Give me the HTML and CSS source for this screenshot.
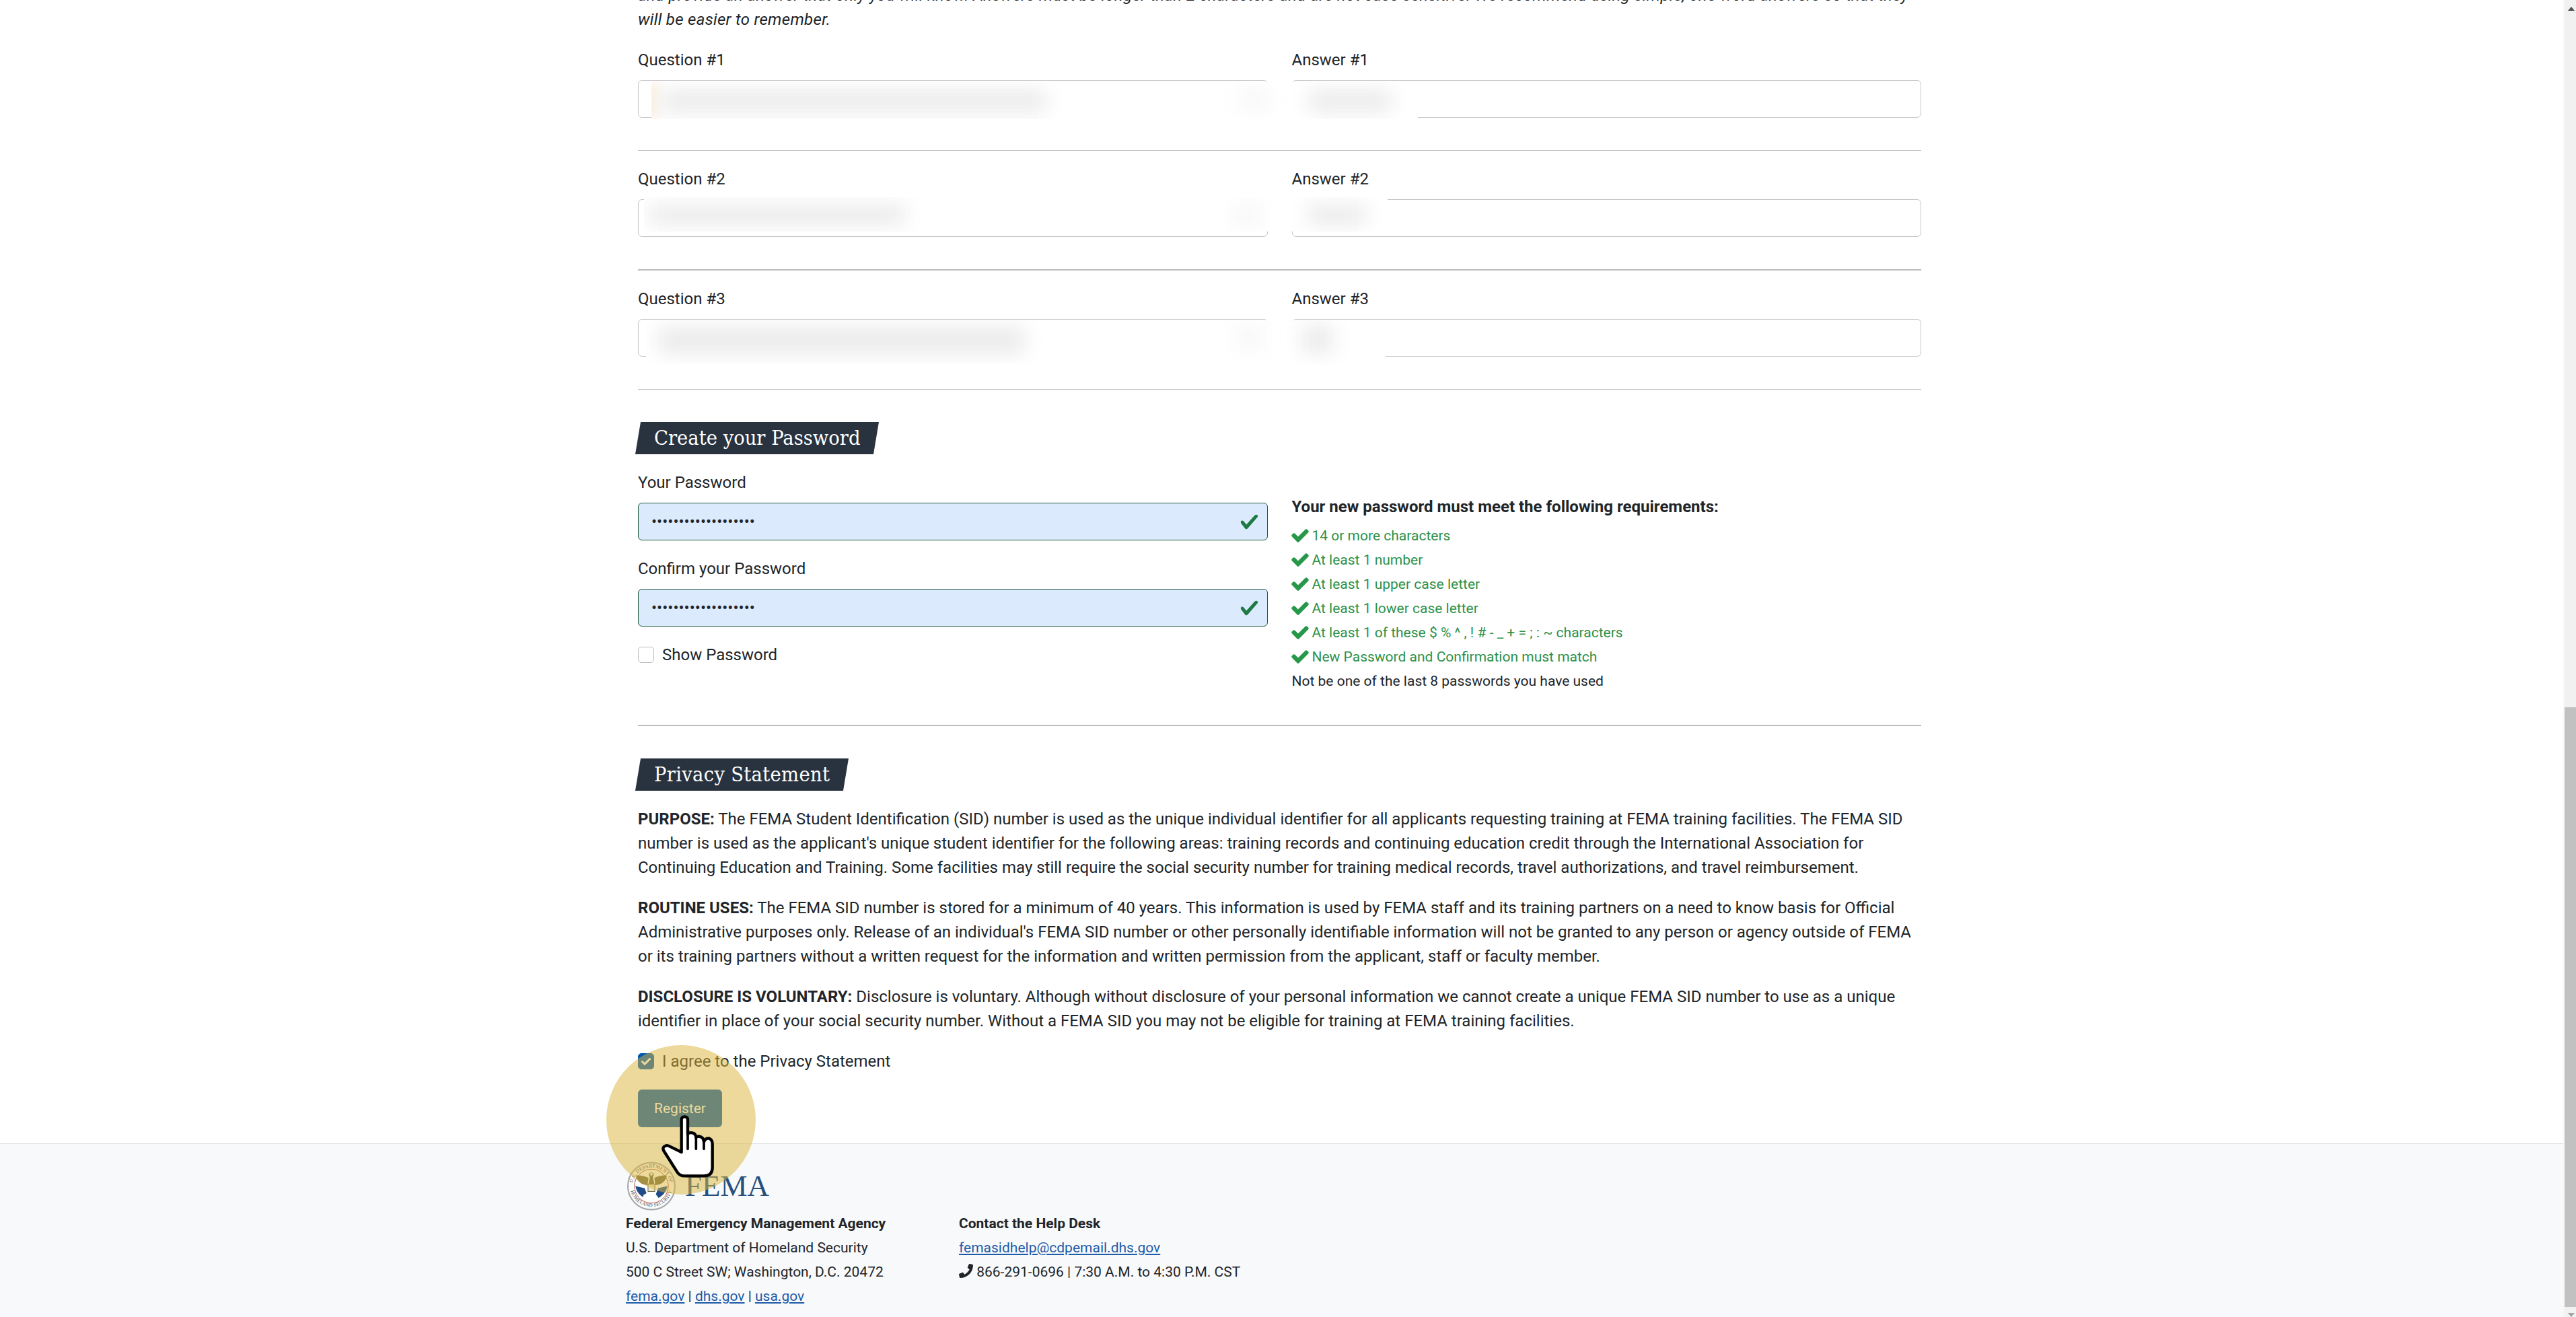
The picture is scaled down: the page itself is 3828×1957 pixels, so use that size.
FILE: index.html
```html
<!DOCTYPE html>
<html lang="en">
<head>
<meta charset="utf-8">
<title>FEMA SID Registration</title>
<link rel="stylesheet" href="styles.css">
</head>
<body>
<div class="viewport">
  <div class="page">
    <main class="main">
      <p class="intro">and provide an answer that only you will know. Answers must be longer than 2 characters and are not case sensitive. We recommend using simple, one-word answers so that they<br>will be easier to remember.</p>

      <div class="qa-row">
        <div class="field"><label class="label">Question #1</label><input class="input" type="text"></div>
        <div class="field"><label class="label">Answer #1</label><input class="input" type="text"></div>
        <div class="redact redact-1">
          <span class="blob blob-tint"></span>
          <span class="blob blob-1a"></span>
          <span class="blob blob-faint"></span>
          <span class="blob blob-1b"></span>
        </div>
      </div>
      <hr class="rule">
      <div class="qa-row">
        <div class="field"><label class="label">Question #2</label><input class="input" type="text"></div>
        <div class="field"><label class="label">Answer #2</label><input class="input" type="text"></div>
        <div class="redact redact-2">
          <span class="blob blob-2a"></span>
          <span class="blob blob-faint"></span>
          <span class="blob blob-2b"></span>
        </div>
      </div>
      <hr class="rule">
      <div class="qa-row">
        <div class="field"><label class="label">Question #3</label><input class="input" type="text"></div>
        <div class="field"><label class="label">Answer #3</label><input class="input" type="text"></div>
        <div class="redact redact-3">
          <span class="blob blob-3a"></span>
          <span class="blob blob-faint"></span>
          <span class="blob blob-3b"></span>
        </div>
      </div>
      <hr class="rule">

      <h2 class="section-tag"><span class="section-text">Create your Password</span></h2>
      <div class="pw-grid">
        <div class="pw-left">
          <div class="field pw-field">
            <label class="label">Your Password</label>
            <div class="valid-wrap">
              <input class="input input-valid" type="password" value="abcdefghijklmnopqrs">
              <svg class="valid-icon" viewBox="0 0 8 8"><path d="M2.3 6.73L.6 4.53c-.4-1.04.46-1.4 1.1-.8l1.1 1.4 3.4-3.8c.6-.63 1.6-.27 1.2.7l-4 4.6c-.43.5-.8.4-1.1.1z"/></svg>
            </div>
          </div>
          <div class="field pw-field">
            <label class="label">Confirm your Password</label>
            <div class="valid-wrap">
              <input class="input input-valid" type="password" value="abcdefghijklmnopqrs">
              <svg class="valid-icon" viewBox="0 0 8 8"><path d="M2.3 6.73L.6 4.53c-.4-1.04.46-1.4 1.1-.8l1.1 1.4 3.4-3.8c.6-.63 1.6-.27 1.2.7l-4 4.6c-.43.5-.8.4-1.1.1z"/></svg>
            </div>
          </div>
          <div class="check-row"><span class="check"></span><span>Show Password</span></div>
        </div>
        <div class="pw-right">
          <p class="req-title">Your new password must meet the following requirements:</p>
          <ul class="req-list">
            <li class="req req-ok"><svg class="req-icon" viewBox="0 0 512 512"><path d="M173.898 439.404l-166.4-166.4c-9.997-9.997-9.997-26.206 0-36.204l36.203-36.204c9.997-9.998 26.207-9.998 36.204 0L192 312.69 432.095 72.596c9.997-9.997 26.207-9.997 36.204 0l36.203 36.204c9.997 9.997 9.997 26.206 0 36.204l-294.4 294.401c-9.998 9.997-26.207 9.997-36.204-.001z"/></svg>14 or more characters</li>
            <li class="req req-ok"><svg class="req-icon" viewBox="0 0 512 512"><path d="M173.898 439.404l-166.4-166.4c-9.997-9.997-9.997-26.206 0-36.204l36.203-36.204c9.997-9.998 26.207-9.998 36.204 0L192 312.69 432.095 72.596c9.997-9.997 26.207-9.997 36.204 0l36.203 36.204c9.997 9.997 9.997 26.206 0 36.204l-294.4 294.401c-9.998 9.997-26.207 9.997-36.204-.001z"/></svg>At least 1 number</li>
            <li class="req req-ok"><svg class="req-icon" viewBox="0 0 512 512"><path d="M173.898 439.404l-166.4-166.4c-9.997-9.997-9.997-26.206 0-36.204l36.203-36.204c9.997-9.998 26.207-9.998 36.204 0L192 312.69 432.095 72.596c9.997-9.997 26.207-9.997 36.204 0l36.203 36.204c9.997 9.997 9.997 26.206 0 36.204l-294.4 294.401c-9.998 9.997-26.207 9.997-36.204-.001z"/></svg>At least 1 upper case letter</li>
            <li class="req req-ok"><svg class="req-icon" viewBox="0 0 512 512"><path d="M173.898 439.404l-166.4-166.4c-9.997-9.997-9.997-26.206 0-36.204l36.203-36.204c9.997-9.998 26.207-9.998 36.204 0L192 312.69 432.095 72.596c9.997-9.997 26.207-9.997 36.204 0l36.203 36.204c9.997 9.997 9.997 26.206 0 36.204l-294.4 294.401c-9.998 9.997-26.207 9.997-36.204-.001z"/></svg>At least 1 lower case letter</li>
            <li class="req req-ok"><svg class="req-icon" viewBox="0 0 512 512"><path d="M173.898 439.404l-166.4-166.4c-9.997-9.997-9.997-26.206 0-36.204l36.203-36.204c9.997-9.998 26.207-9.998 36.204 0L192 312.69 432.095 72.596c9.997-9.997 26.207-9.997 36.204 0l36.203 36.204c9.997 9.997 9.997 26.206 0 36.204l-294.4 294.401c-9.998 9.997-26.207 9.997-36.204-.001z"/></svg>At least 1 of these $ % ^ , ! # - _ + = ; : ~ characters</li>
            <li class="req req-ok"><svg class="req-icon" viewBox="0 0 512 512"><path d="M173.898 439.404l-166.4-166.4c-9.997-9.997-9.997-26.206 0-36.204l36.203-36.204c9.997-9.998 26.207-9.998 36.204 0L192 312.69 432.095 72.596c9.997-9.997 26.207-9.997 36.204 0l36.203 36.204c9.997 9.997 9.997 26.206 0 36.204l-294.4 294.401c-9.998 9.997-26.207 9.997-36.204-.001z"/></svg>New Password and Confirmation must match</li>
            <li class="req">Not be one of the last 8 passwords you have used</li>
          </ul>
        </div>
      </div>
      <hr class="rule rule-after-pw">

      <h2 class="section-tag section-tag-privacy"><span class="section-text">Privacy Statement</span></h2>
      <p class="para"><strong>PURPOSE:</strong> The FEMA Student Identification (SID) number is used as the unique individual identifier for all applicants requesting training at FEMA training facilities. The FEMA SID number is used as the applicant's unique student identifier for the following areas: training records and continuing education credit through the International Association for Continuing Education and Training. Some facilities may still require the social security number for training medical records, travel authorizations, and travel reimbursement.</p>
      <p class="para"><strong>ROUTINE USES:</strong> The FEMA SID number is stored for a minimum of 40 years. This information is used by FEMA staff and its training partners on a need to know basis for Official Administrative purposes only. Release of an individual's FEMA SID number or other personally identifiable information will not be granted to any person or agency outside of FEMA or its training partners without a written request for the information and written permission from the applicant, staff or faculty member.</p>
      <p class="para"><strong>DISCLOSURE IS VOLUNTARY:</strong> Disclosure is voluntary. Although without disclosure of your personal information we cannot create a unique FEMA SID number to use as a unique identifier in place of your social security number. Without a FEMA SID you may not be eligible for training at FEMA training facilities.</p>
      <div class="check-row check-row-agree">
        <span class="check check-on"><svg viewBox="0 0 16 16"><path d="M3 8.5l3.2 3.2L13 5" fill="none" stroke="#fff" stroke-width="2.6" stroke-linecap="round" stroke-linejoin="round"/></svg></span>
        <span>I agree to the Privacy Statement</span>
      </div>
      <button class="btn" type="button">Register</button>
    </main>

    <footer class="footer">
      <div class="footer-inner">
        <div class="logo">
          <svg class="seal" viewBox="0 0 100 100">
            <defs>
              <path id="sealTop" d="M12 62 A39.5 39.5 0 1 1 88 62"/>
              <path id="sealBottom" d="M7 58 A44 44 0 0 0 93 58"/>
            </defs>
            <circle cx="50" cy="50" r="48.5" fill="#fff" stroke="#a9a9a9" stroke-width="3"/>
            <text class="seal-text"><textPath href="#sealTop" startOffset="50%" text-anchor="middle">U.S. DEPARTMENT OF</textPath></text>
            <text class="seal-text"><textPath href="#sealBottom" startOffset="50%" text-anchor="middle">HOMELAND SECURITY</textPath></text>
            <circle cx="50" cy="50" r="35" fill="#fff" stroke="#b5483f" stroke-width="1.3"/>
            <path d="M17 50 L36 54 L42 70 L58 70 L64 54 L83 50 A33.5 33.5 0 0 1 17 50Z" fill="#1f4c86"/>
            <path d="M34 68 L48 60 L60 68 L66 76 L44 80 L32 74Z" fill="#fff"/>
            <path d="M50 22 q5 0 5 5 l-2 5 l3 14 h-12 l3 -14 l-2 -5 q0 -5 5 -5Z" fill="#6d6a46"/>
            <path d="M44 33 Q30 27 18 28 Q22 46 42 48Z M56 33 Q70 27 82 28 Q78 46 58 48Z" fill="#6f6c48"/>
            <rect x="43" y="46" width="14" height="15" fill="#ece6cf" stroke="#6f6c48" stroke-width="1.5"/>
            <path d="M47 24 q3 -3 6 0 l-1 4 h-4Z" fill="#f4f1e2"/>
          </svg>
          <span class="logo-word">FEMA</span>
        </div>
        <div class="footer-cols">
          <div class="footer-col">
            <strong class="footer-strong">Federal Emergency Management Agency</strong>
            <span>U.S. Department of Homeland Security</span>
            <span>500 C Street SW; Washington, D.C. 20472</span>
            <span><a class="link" href="#">fema.gov</a> | <a class="link" href="#">dhs.gov</a> | <a class="link" href="#">usa.gov</a></span>
          </div>
          <div class="footer-col">
            <strong class="footer-strong">Contact the Help Desk</strong>
            <span><a class="link" href="#">femasidhelp@cdpemail.dhs.gov</a></span>
            <span><svg class="phone" viewBox="0 0 512 512"><path d="M493.4 24.6l-104-24c-11.3-2.6-22.9 3.3-27.5 13.9l-48 112c-4.2 9.8-1.4 21.3 6.9 28l60.6 49.6c-36 76.7-98.9 140.5-177.2 177.2l-49.6-60.6c-6.8-8.3-18.2-11.1-28-6.9l-112 48C3.9 366.5-2 378.1.6 389.4l24 104C27.1 504.2 36.7 512 48 512c256.1 0 464-207.5 464-464 0-11.2-7.7-20.9-18.6-23.4z"/></svg> 866-291-0696 | 7:30 A.M. to 4:30 P.M. CST</span>
          </div>
        </div>
      </div>
    </footer>

    <div class="click-halo"></div>
    <svg class="hand" viewBox="170 15 245 290">
      <path class="hand-shape" d="M262 186 L262 42 Q262 28 276 28 Q290 28 290 42 L290 105 Q295 98 310 100 Q325 102 327 120 Q335 112 348 118 Q360 122 362 140 Q370 122 385 125 Q400 130 400 150 L400 255 Q400 292 362 292 L275 292 Q255 292 243 275 L183 180 Q175 165 190 158 Q200 153 215 163 Z"/>
      <path class="hand-line" d="M290 105 L290 172 M327 120 L327 172 M362 140 L362 172"/>
    </svg>
  </div>

  <aside class="scrollbar">
    <span class="scroll-arrow scroll-arrow-up"></span>
    <span class="scroll-spacer"></span>
    <span class="scroll-thumb"></span>
    <span class="scroll-arrow scroll-arrow-down"></span>
  </aside>
</div>
</body>
</html>
```

FILE: styles.css
```css
* { box-sizing: border-box; }
html, body { margin: 0; height: 100%; overflow: hidden; }
body {
  font-family: Roboto, "Liberation Sans", sans-serif;
  font-size: 24px;
  line-height: 36px;
  color: #212529;
  background: #fff;
}
.viewport { display: flex; height: 1957px; overflow: hidden; }
.page { position: relative; flex: 1; min-width: 0; }

.main { width: 1907px; margin-left: 948px; margin-top: -25.5px; }

.intro { margin: 0 0 24px; font-style: italic; letter-spacing: .3px; }

.qa-row {
  position: relative;
  display: grid;
  grid-template-columns: 1fr 1fr;
  column-gap: 36px;
}
.field { display: flex; flex-direction: column; }
.label { display: block; margin-bottom: 12px; }
.input {
  display: block;
  width: 100%;
  height: 56px;
  padding: 0 19px;
  border: 1.5px solid #c6c6c6;
  border-radius: 6px;
  background: #fff;
  font: inherit;
  color: #212529;
  outline: none;
}
.rule {
  height: 1.5px;
  margin: 48px 0 24px;
  border: 0;
  background: #bdbdbd;
}
.rule-after-pw { margin-top: 47px; margin-bottom: 48.5px; }

.redact { position: absolute; overflow: hidden; background: #fff; }
.redact-1 { left: 20px; top: 51.5px; width: 1139px; height: 55px; }
.redact-2 { left: 9px; top: 45px; width: 1105px; height: 51px; }
.redact-3 { left: 12px; top: 50.5px; width: 1099px; height: 65px; }
.blob { position: absolute; display: block; background: #ececec; filter: blur(14px); }
.blob-tint { left: -8px; top: 0; width: 20px; height: 55px; background: #fdf3e8; filter: blur(6px); }
.blob-1a { left: 12px; top: 11px; width: 575px; height: 34px; }
.blob-1b { left: 976px; top: 11px; width: 124px; height: 34px; }
.blob-2a { left: 8px; top: 10px; width: 380px; height: 32px; }
.blob-2b { left: 986px; top: 10px; width: 86px; height: 32px; }
.blob-3a { left: 18px; top: 9px; width: 545px; height: 42px; }
.blob-3b { left: 975px; top: 6px; width: 46px; height: 44px; }
.blob-faint { left: 875px; top: 8px; width: 44px; height: 36px; background: #f8f8f8; }

.section-tag {
  position: relative;
  display: table;
  height: 48px;
  margin: 48px 0 24px;
  padding: 0 24px;
  font-family: "DejaVu Serif Condensed", "DejaVu Serif", serif;
  font-size: 30.5px;
  font-weight: 400;
  line-height: 48px;
  color: #fff;
}
.section-tag::before {
  content: "";
  position: absolute;
  inset: 0;
  background: #29333f;
  transform: skewX(-9.5deg);
}
.section-text { position: relative; }
.section-tag-privacy { margin-top: 0; letter-spacing: .3px; }

.pw-grid { display: grid; grid-template-columns: 1fr 1fr; column-gap: 36px; }
.pw-field { margin-bottom: 24px; }
.valid-wrap { position: relative; }
.input-valid { background: #dbeafc; border-color: #1d5c3c; }
.valid-icon {
  position: absolute;
  right: 13px;
  top: 14px;
  width: 29px;
  height: 29px;
  fill: #1e7a44;
}
.check-row { display: flex; align-items: center; gap: 12px; }
.check {
  display: flex;
  align-items: center;
  justify-content: center;
  width: 24px;
  height: 24px;
  border: 1.5px solid #bdbdbd;
  border-radius: 5px;
  background: #fff;
}
.check-on { background: #0058b4; border-color: #0058b4; }
.check-on svg { width: 18px; height: 18px; }
.check-row-agree { margin-top: 24px; }

.pw-right { padding-top: 36px; font-size: 21px; }
.req-title { margin: 0 0 7px; font-size: 24px; font-weight: 700; }
.req-list { margin: 0; padding: 0; list-style: none; }
.req { display: flex; align-items: center; height: 36px; }
.req-ok { color: #2d9149; }
.req-icon {
  width: 24px;
  height: 24px;
  margin-right: 6px;
  fill: #27984a;
  stroke: #27984a;
  stroke-width: 34;
  stroke-linejoin: round;
  overflow: visible;
  flex: none;
}

.para { margin: 0 0 24px; }

.btn {
  display: block;
  width: 125px;
  height: 56px;
  margin: 24px 0 24px;
  padding: 0;
  border: 0;
  border-radius: 6px;
  background: #0058b4;
  color: #fff;
  font-family: inherit;
  font-size: 21px;
}

.footer {
  height: 258px;
  border-top: 1.5px solid #dcdcdc;
  background: #f8f9fa;
  font-size: 21px;
}
.footer-inner { padding: 25px 0 0 930px; }
.logo { display: flex; align-items: center; height: 74px; margin-left: 2px; }
.seal { width: 72px; height: 73px; }
.seal-text { font-family: "Liberation Serif", serif; font-size: 10px; fill: #444; letter-spacing: .4px; }
.logo-word {
  margin-left: 14px;
  font-family: "Liberation Serif", serif;
  font-size: 45px;
  line-height: 60px;
  color: #27507f;
}
.footer-cols { display: flex; margin-top: 1px; }
.footer-col { display: flex; flex-direction: column; width: 495px; }
.footer-strong { font-weight: 700; }
.link { color: #1e5ba8; text-decoration: underline; }
.phone { display: inline-block; width: 21px; height: 21px; vertical-align: -2px; fill: #212529; }

.click-halo {
  position: absolute;
  left: 901px;
  top: 1553px;
  width: 222px;
  height: 222px;
  border-radius: 50%;
  background: rgba(218, 180, 55, .5);
}
.hand { position: absolute; left: 981.7px; top: 1655px; width: 81.7px; height: 96.7px; }
.hand-shape { fill: #fff; stroke: #000; stroke-width: 13; stroke-linejoin: round; }
.hand-line { fill: none; stroke: #000; stroke-width: 11; stroke-linecap: round; }

.scrollbar {
  display: flex;
  flex-direction: column;
  flex: none;
  width: 19px;
  background: #f1f1f1;
  border-left: 2px solid #f7f7f7;
}
.scroll-arrow { flex: none; height: 15px; position: relative; }
.scroll-arrow::after {
  content: "";
  position: absolute;
  left: 5px;
  border-left: 5.5px solid transparent;
  border-right: 5.5px solid transparent;
}
.scroll-arrow-up::after { top: 10px; border-bottom: 6px solid #505050; }
.scroll-arrow-down::after { top: 9px; border-top: 6px solid #a3a3a3; }
.scroll-spacer { flex: none; height: 1036px; }
.scroll-thumb { flex: 1; background: #c1c1c1; }
```
